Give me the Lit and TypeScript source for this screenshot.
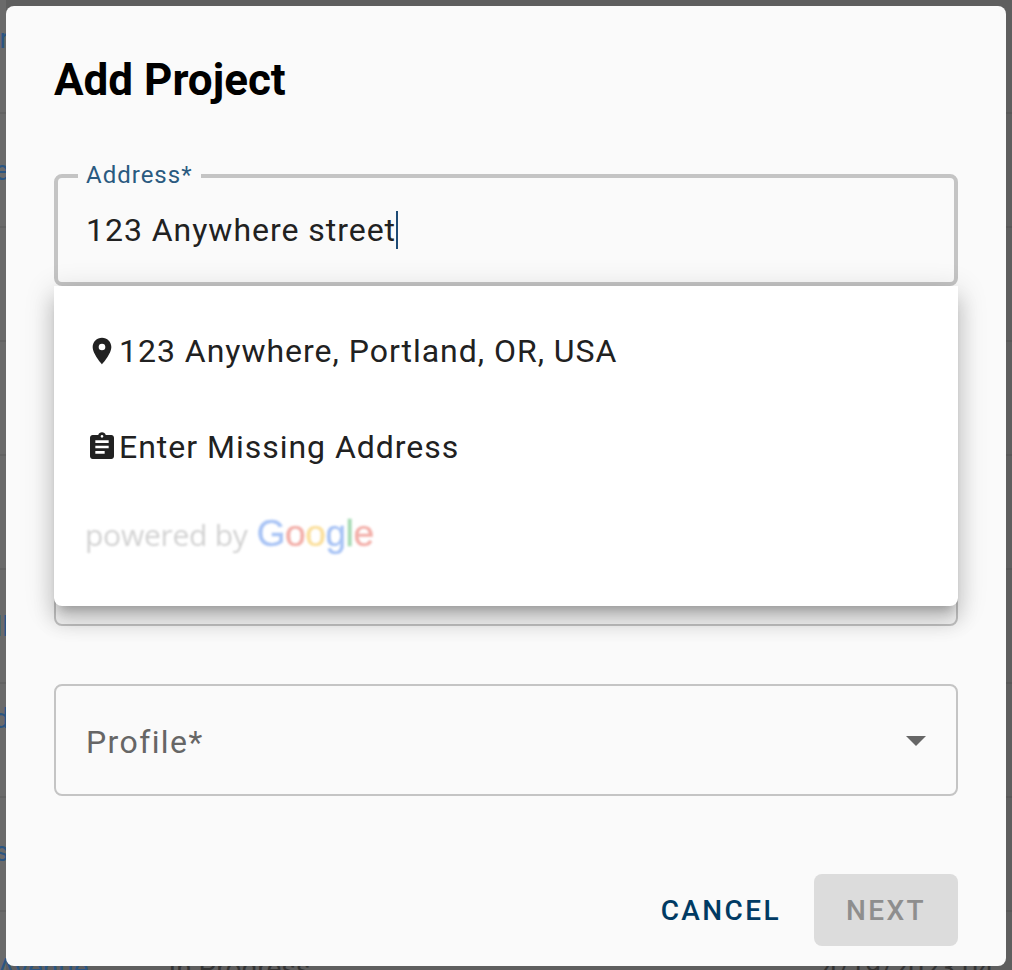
import { LitElement, html, css } from "lit";
import { customElement } from "lit/decorators.js";

const rows: { name: string; shift: number }[] = [
  { name: "Harbor", shift: -34 },
  { name: "Lakeside", shift: 2 },
  { name: "", shift: 0 },
  { name: "", shift: 0 },
  { name: "", shift: 0 },
  { name: "Hall", shift: 2 },
  { name: "Field", shift: -42 },
  { name: "Hills", shift: -4 },
];

@customElement("app-root")
export class AppRoot extends LitElement {
  static styles = css`
    :host { display: block; width: 1012px; height: 970px; overflow: hidden; position: relative; background: linear-gradient(to right, #6a6a6a 6px, #5e5e5e 6px); font-family: Roboto, "Liberation Sans", sans-serif; }
    .table { display: flex; flex-direction: column; }
    .row { height: 114px; box-sizing: border-box; border-bottom: 2px solid rgba(0,0,0,.07); display: flex; align-items: center; color: #2a5582; font-size: 28px; line-height: 36px; white-space: nowrap; flex: none; }
    .name { width: 9px; flex: none; display: flex; flex-direction: column; align-items: flex-end; }
    .last { height: 114px; display: flex; color: #2a5582; font-size: 28px; line-height: 36px; white-space: nowrap; padding-top: 39px; margin-left: -3px; box-sizing: border-box; }
    .status { margin-left: 80px; color: #333; }
    .date { margin-left: 512px; color: #333; }
    .modal { position: absolute; left: 6px; top: 6px; width: 1000px; height: 960px; box-sizing: border-box; background: #fafafa; border-radius: 8px; overflow: hidden; padding: 48px 48px 0; display: flex; flex-direction: column; }
    h1 { margin: 0; font-size: 44px; line-height: 52px; font-weight: 700; color: #000; letter-spacing: 0; }
    .field { position: relative; box-sizing: border-box; height: 112px; border: 2px solid #c4c4c4; border-radius: 8px; display: flex; align-items: center; padding: 0 30px; font-size: 32px; letter-spacing: 1.4px; color: #666; flex: none; }
    .address { margin-top: 68px; border-width: 4px; padding: 0 28px; color: #212121; letter-spacing: 0.97px; }
    .address .value { display: inline-block; border-right: 2px solid #1d4a75; line-height: 38px; }
    .legend { position: absolute; left: 20px; top: -17px; padding: 0 9px 0 8px; background: #fafafa; font-size: 24px; line-height: 28px; color: #2a5a80; letter-spacing: 1px; }
    .hidden-field { margin-top: 228px; }
    .profile { margin-top: 58px; justify-content: space-between; padding-top: 4px; }
    .caret { width: 20px; height: 10px; margin-top: -2px; }
    .menu { position: absolute; left: 48px; top: 280px; width: 904px; height: 320px; background: #fff; border-radius: 0 0 8px 8px; box-shadow: 0 10px 10px -6px rgba(0,0,0,.2), 0 16px 20px 2px rgba(0,0,0,.14), 0 6px 28px 4px rgba(0,0,0,.12); }
    .item { height: 96px; display: flex; align-items: center; padding: 0 32px; color: #212121; font-size: 32px; letter-spacing: 0.98px; }
    .item svg { width: 32px; height: 32px; flex: none; margin-right: 1px; fill: #212121; }
    .first { margin-top: 17px; }
    .powered { padding: 0 31px; margin-top: 19px; font-size: 30px; line-height: 40px; color: #d2d2d2; filter: blur(0.8px); white-space: nowrap; font-family: "Open Sans", sans-serif; letter-spacing: -0.25px; display: flex; align-items: baseline; gap: 9px; }
    .google { font-family: "Liberation Sans", sans-serif; font-size: 37px; letter-spacing: -0.4px; -webkit-text-stroke: 0.5px currentColor; }
    .g1 { color: #a9c4f5; } .g2 { color: #f3b0aa; } .g3 { color: #fbe09f; } .g4 { color: #a9c4f5; } .g5 { color: #a8dbb5; } .g6 { color: #f3b0aa; }
    .actions { margin-top: auto; padding-bottom: 20px; display: flex; justify-content: flex-end; align-items: center; gap: 16px; }
    .btn { height: 72px; box-sizing: border-box; display: flex; align-items: center; justify-content: center; border-radius: 8px; font-size: 28px; font-weight: 500; letter-spacing: 2.4px; }
    .cancel { color: #003a63; padding: 0 17px 0 18px; }
    .next { width: 144px; background: #dcdcdc; color: #8e8e8e; }
  `;

  render() {
    return html`
      <div class="table">
        ${rows.map(
          (r) => html`<div class="row"><div class="name" style="margin-top:${r.shift}px"><span>${r.name}</span></div></div>`
        )}
        <div class="last"><span>Avenue</span><span class="status">In Progress</span><span class="date">4/19/2023 04</span></div>
      </div>
      <div class="modal">
        <h1>Add Project</h1>
        <div class="field address">
          <span class="legend">Address*</span>
          <span class="value">123 Anywhere street</span>
        </div>
        <div class="field hidden-field"></div>
        <div class="field profile">
          <span>Profile*</span>
          <svg class="caret" viewBox="0 0 20 10"><path d="M0 0h20L10 10z" fill="#666"></path></svg>
        </div>
        <div class="actions">
          <div class="btn cancel">CANCEL</div>
          <div class="btn next">NEXT</div>
        </div>
        <div class="menu">
          <div class="item first">
            <svg viewBox="0 0 24 24"><path d="M12 2C8.13 2 5 5.13 5 9c0 5.25 7 13 7 13s7-7.75 7-13c0-3.87-3.13-7-7-7zm0 9.5a2.5 2.5 0 0 1 0-5 2.5 2.5 0 0 1 0 5z"></path></svg>
            123 Anywhere, Portland, OR, USA
          </div>
          <div class="item">
            <svg viewBox="0 0 24 24"><path d="M19 3h-4.18C14.4 1.84 13.3 1 12 1s-2.4.84-2.82 2H5c-1.1 0-2 .9-2 2v14c0 1.1.9 2 2 2h14c1.1 0 2-.9 2-2V5c0-1.1-.9-2-2-2zm-7 0c.55 0 1 .45 1 1s-.45 1-1 1-1-.45-1-1 .45-1 1-1zm2 14H7v-2h7v2zm3-4H7v-2h10v2zm0-4H7V7h10v2z"></path></svg>
            Enter Missing Address
          </div>
          <div class="powered"><span>powered by</span><span class="google"><span class="g1">G</span><span class="g2">o</span><span class="g3">o</span><span class="g4">g</span><span class="g5">l</span><span class="g6">e</span></span></div>
        </div>
      </div>
    `;
  }
}
